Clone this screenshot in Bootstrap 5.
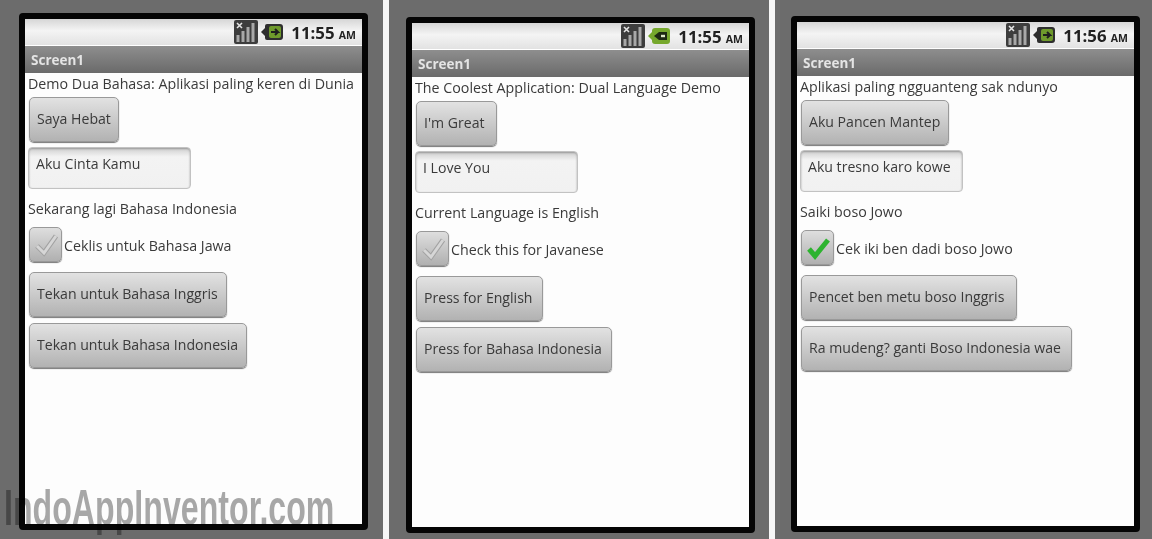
<!DOCTYPE html>
<html lang="en">
<head>
<meta charset="utf-8">
<link href="https://cdn.jsdelivr.net/npm/bootstrap@5.3.0/dist/css/bootstrap.min.css" rel="stylesheet">
<style>
html,body{margin:0;height:539px;overflow:hidden;background:#6c6c6c}
.sheet{width:1152px;height:539px;position:relative;font-family:"Open Sans","Noto Sans",sans-serif;color:#3a3a3a}
.pane{height:539px;background:#6c6c6c;flex:none}
.pane-a{width:383px;padding:13px 0 0 19px}
.pane-b{width:380px;padding:17px 0 0 17px}
.pane-c{width:377px;padding:16px 0 0 16px}
.gutter{width:6px;flex:none;background:#f6f6f6}
.phone{width:349px;height:517px;border:6px solid #050505;border-radius:4px;background:#fdfdfd;overflow:hidden}
.pane-b .phone,.pane-c .phone{height:516px}
.phone-inner{filter:blur(.4px)}
.statusrow{height:27px;background:linear-gradient(#d6d6d6,#f4f4f4 45%,#e2e2e2);border-bottom:1px solid #fff}
.clock{font:700 16.8px "Open Sans",sans-serif;color:#222;margin:0 6px 0 8px;white-space:nowrap}
.clock span{font-size:10.5px}
.batt{margin-left:3px}
.titlerow{height:27px;background:linear-gradient(#8e8e8e,#6a6a6a);color:#e4e4e4;font:700 13.5px "Open Sans",sans-serif;padding-left:6px}
.body-area{padding:0 0 0 3px}
.lbl{font-size:14.25px;line-height:22px;white-space:nowrap}
.lbl-top{margin-bottom:2px}
.wbtn{display:block;height:45px;border:1px solid #999;border-radius:5px;background:linear-gradient(#e2e2e2,#b2b2b2);box-shadow:0 1px 1px #777;font-size:14.1px;color:#3a3a3a;padding:0 0 2px 7px;text-align:left;margin-left:1px;white-space:nowrap}
.wbtn-near{margin-bottom:6px}
.tbox{width:163px;height:42px;border:1px solid #c2c2c2;border-radius:4px;background:linear-gradient(#cfcfcf,#f3f3f3 22%,#f1f1f1);box-shadow:inset 0 1px 2px #999;font-size:14.1px;padding:5px 7px;margin:5px 0 9px}
.cbxrow{margin:7px 0 10px}
.cbx{width:33px;height:35px;border:1px solid #999;border-radius:5px;background:linear-gradient(#dedede,#b0b0b0);box-shadow:0 1px 1px #777;margin-left:1px}
.cbxlbl{margin-left:2px;padding-top:2px}
.w-a1{width:90px}.w-a2{width:198px}.w-a3{width:218px}
.w-b1{width:81px}.w-b2{width:127px}.w-b3{width:196px}
.w-c1{width:148px}.w-c2{width:216px}.w-c3{width:271px}
.wm{position:absolute;left:4px;top:483px;font:700 50px/50px "Liberation Sans",sans-serif;color:rgba(0,0,0,.34);transform:scaleX(.643);transform-origin:0 0;white-space:nowrap}
</style>
</head>
<body>
<div class="sheet d-flex">
  <svg width="0" height="0" class="position-absolute">
    <defs>
      <symbol id="sig" viewBox="0 0 24 24"><rect width="24" height="24" rx="2" fill="#3d3d3d"/><path d="M3 3l5 5M8 3l-5 5" stroke="#e4e4e4" stroke-width="1.6"/><path d="M4 22v-7M9 22V11M14 22V7M19 22V3" stroke="#a8a8a8" stroke-width="3"/></symbol>
      <symbol id="bat" viewBox="0 0 22 16"><path d="M0 8l4-4V2a2 2 0 0 1 2-2h13a3 3 0 0 1 3 3v10a3 3 0 0 1-3 3H6a2 2 0 0 1-2-2v-2z" fill="#2e2e2e"/><rect x="8" y="2" width="12" height="12" rx="2" fill="#6f9a2c"/><path d="M10 8h7l-3-3M17 8l-3 3" stroke="#1e1e1e" stroke-width="2" fill="none"/></symbol>
      <symbol id="batg" viewBox="0 0 22 16"><path d="M0 8l4-4V3a3 3 0 0 1 3-3h12a3 3 0 0 1 3 3v10a3 3 0 0 1-3 3H7a3 3 0 0 1-3-3v-1z" fill="#76a82c"/><path d="M6 8l5-4h8v8h-8z" fill="#1e2a12"/><path d="M13 8h4" stroke="#dfe9c8" stroke-width="2.4"/></symbol>
      <symbol id="dimcheck" viewBox="0 0 28 28"><path d="M5 15l7 7L24 5" fill="none" stroke="#a2a2a2" stroke-width="5"/><path d="M5 15l7 7L24 5" fill="none" stroke="#d6d6d6" stroke-width="3"/></symbol>
    </defs>
  </svg>
  <div class="pane pane-a">
    <div class="phone"><div class="phone-inner">
      <div class="statusrow d-flex justify-content-end align-items-center"><svg width="24" height="24"><use href="#sig"/></svg><svg width="22" height="16" class="batt"><use href="#bat"/></svg><div class="clock">11:55 <span>AM</span></div></div>
      <div class="titlerow d-flex align-items-center">Screen1</div>
      <div class="body-area">
        <div class="lbl lbl-top">Demo Dua Bahasa: Aplikasi paling keren di Dunia</div>
        <button class="wbtn w-a1">Saya Hebat</button>
        <div class="tbox">Aku Cinta Kamu</div>
        <div class="lbl">Sekarang lagi Bahasa Indonesia</div>
        <div class="cbxrow d-flex align-items-center"><div class="cbx d-flex align-items-center justify-content-center"><svg width="28" height="28"><use href="#dimcheck"/></svg></div><div class="lbl cbxlbl">Ceklis untuk Bahasa Jawa</div></div>
        <button class="wbtn wbtn-near w-a2">Tekan untuk Bahasa Inggris</button>
        <button class="wbtn w-a3">Tekan untuk Bahasa Indonesia</button>
      </div>
    </div></div>
  </div>
  <div class="gutter"></div>
  <div class="pane pane-b">
    <div class="phone"><div class="phone-inner">
      <div class="statusrow d-flex justify-content-end align-items-center"><svg width="24" height="24"><use href="#sig"/></svg><svg width="22" height="16" class="batt"><use href="#batg"/></svg><div class="clock">11:55 <span>AM</span></div></div>
      <div class="titlerow d-flex align-items-center">Screen1</div>
      <div class="body-area">
        <div class="lbl lbl-top">The Coolest Application: Dual Language Demo</div>
        <button class="wbtn w-b1">I'm Great</button>
        <div class="tbox">I Love You</div>
        <div class="lbl">Current Language is English</div>
        <div class="cbxrow d-flex align-items-center"><div class="cbx d-flex align-items-center justify-content-center"><svg width="28" height="28"><use href="#dimcheck"/></svg></div><div class="lbl cbxlbl">Check this for Javanese</div></div>
        <button class="wbtn wbtn-near w-b2">Press for English</button>
        <button class="wbtn w-b3">Press for Bahasa Indonesia</button>
      </div>
    </div></div>
  </div>
  <div class="gutter"></div>
  <div class="pane pane-c">
    <div class="phone"><div class="phone-inner">
      <div class="statusrow d-flex justify-content-end align-items-center"><svg width="24" height="24"><use href="#sig"/></svg><svg width="22" height="16" class="batt"><use href="#bat"/></svg><div class="clock">11:56 <span>AM</span></div></div>
      <div class="titlerow d-flex align-items-center">Screen1</div>
      <div class="body-area">
        <div class="lbl lbl-top">Aplikasi paling ngguanteng sak ndunyo</div>
        <button class="wbtn w-c1">Aku Pancen Mantep</button>
        <div class="tbox">Aku tresno karo kowe</div>
        <div class="lbl">Saiki boso Jowo</div>
        <div class="cbxrow d-flex align-items-center"><div class="cbx d-flex align-items-center justify-content-center"><svg width="28" height="28" viewBox="0 0 28 28"><path d="M5 15l6 7L24 6" fill="none" stroke="#2db32f" stroke-width="5"/></svg></div><div class="lbl cbxlbl">Cek iki ben dadi boso Jowo</div></div>
        <button class="wbtn wbtn-near w-c2">Pencet ben metu boso Inggris</button>
        <button class="wbtn w-c3">Ra mudeng? ganti Boso Indonesia wae</button>
      </div>
    </div></div>
  </div>
  <div class="wm">IndoAppInventor.com</div>
</div>
</body>
</html>
